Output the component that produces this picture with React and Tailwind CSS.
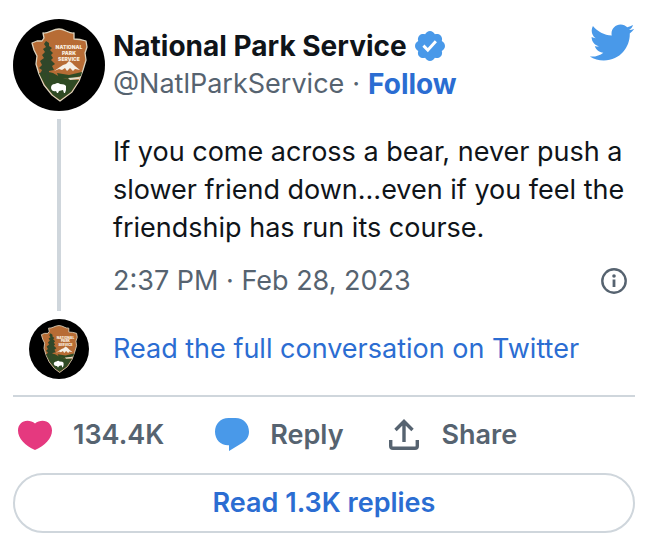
function ParkLogo({ className }) {
  return (
    <svg viewBox="0 0 92 92" className={className} role="img" aria-label="National Park Service">
      <circle cx="46" cy="46" r="46" fill="#000" />
      <path
        d="M30 14 C35 15 40 10 46 10 C52 10 56 15 61 14 L61 20 Q67 20 73 22 L74 28 L72 34 L73 41 L70 51 L66 62 L59 73 L47 82 L39 76 L31 66 L26 55 L23 45 L24 37 L21 31 L19 24 L24 22 L29 22 L31 19 Z"
        fill="#b76c35"
        stroke="#ddd3bd"
        strokeWidth="1.3"
        strokeLinejoin="round"
      />
      <path d="M26 54 Q34 52 40 54 Q46 58 53 60 L66 61 L58 73 L47 81 L40 76 L32 66 Z" fill="#2f4a24" />
      <path d="M44 54 L56 56 L69 53 L68 57 L56 60 L46 59 Z" fill="#2f4a24" />
      <path d="M55 59 L67 58 L66 60 L57 61 Z" fill="#e3ddca" />
      <path d="M41 52 L47 48 L50 46 L53 45 L56 42 L59 44 L62 47 L67 51 L62 50 L60 52 L57 49 L54 52 L52 49 L49 51 L46 50 Z" fill="#f5f0e7" />
      <path
        d="M33 22 L36 24 L36 27 L39 29 L37 31 L40 34 L38 36 L40 39 L38 41 L42 45 L39 47 L41 51 L36 52 L36 62 L33 62 L33 54 L27 55 L29 51 L26 49 L29 46 L27 42 L31 39 L29 36 L32 33 L30 30 L33 28 L31 25 Z"
        fill="#30472a"
      />
      <path
        d="M38 69 Q38 65 42 65 Q45 63 47 65 Q52 65 53 67 L53 71 L52 74 L51 74 L50 71 L46 72 L45 74 L44 74 L43 72 Q39 73 38 69 Z"
        fill="#fff"
      />
      <g fill="#f8ecdf" fontFamily="Inter, sans-serif" fontWeight="900" fontSize="5" textAnchor="middle">
        <text x="56" y="30">NATIONAL</text>
        <text x="56" y="36">PARK</text>
        <text x="56" y="42">SERVICE</text>
      </g>
    </svg>
  );
}

function VerifiedIcon() {
  return (
    <svg viewBox="1.75 1.75 20.5 20.5" className="size-[30px] shrink-0 fill-[#4999e9]" role="img" aria-label="Verified account">
      <path d="M22.25 12c0-1.43-.88-2.67-2.19-3.34.46-1.39.2-2.9-.81-3.91s-2.52-1.27-3.91-.81c-.66-1.31-1.91-2.19-3.34-2.19s-2.67.88-3.33 2.19c-1.4-.46-2.91-.2-3.92.81s-1.26 2.52-.8 3.91c-1.31.67-2.2 1.91-2.2 3.34s.89 2.67 2.2 3.34c-.46 1.39-.21 2.9.8 3.91s2.52 1.26 3.91.81c.67 1.31 1.91 2.19 3.34 2.19s2.68-.88 3.34-2.19c1.39.45 2.9.2 3.91-.81s1.27-2.52.81-3.91c1.31-.67 2.19-1.91 2.19-3.34zm-11.71 4.2L6.8 12.46l1.41-1.42 2.26 2.26 4.8-5.23 1.47 1.36-6.2 6.77z" />
    </svg>
  );
}

function TwitterBird() {
  return (
    <svg viewBox="0 0 24 24" className="size-[47px] fill-[#4999e9]" aria-hidden="true">
      <path d="M23.643 4.937c-.835.37-1.732.62-2.675.733.962-.576 1.7-1.49 2.048-2.578-.9.534-1.897.922-2.958 1.13-.85-.904-2.06-1.47-3.4-1.47-2.572 0-4.658 2.086-4.658 4.66 0 .364.042.718.12 1.06-3.873-.195-7.304-2.05-9.602-4.868-.4.69-.63 1.49-.63 2.342 0 1.616.823 3.043 2.072 3.878-.764-.025-1.482-.234-2.11-.583v.06c0 2.257 1.605 4.14 3.737 4.568-.392.106-.803.162-1.227.162-.3 0-.593-.028-.877-.082.593 1.85 2.313 3.198 4.352 3.234-1.595 1.25-3.604 1.995-5.786 1.995-.376 0-.747-.022-1.112-.065 2.062 1.323 4.51 2.093 7.14 2.093 8.57 0 13.255-7.098 13.255-13.254 0-.2-.005-.402-.014-.602.91-.658 1.7-1.477 2.323-2.41z" />
    </svg>
  );
}

function HeartIcon() {
  return (
    <svg viewBox="0 0 44 44" className="size-11 fill-[#e5397f]" aria-hidden="true">
      <path d="M22 10.6C24 8.6 27 7.8 29.5 7.8C35 7.8 39 12 39 17.5C39 25.5 32 32.5 22 37C12 32.5 5 25.5 5 17.5C5 12 9 7.8 14.5 7.8C17 7.8 20 8.6 22 10.6Z" />
    </svg>
  );
}

function ReplyIcon() {
  return (
    <svg viewBox="0 0 44 44" className="size-11 fill-[#4999e9]" aria-hidden="true">
      <path d="M18.5 5H25.5C33.5 5 39 11 39 18.7C39 23.5 36.5 27.3 32.500 29.8L19 38V32.3H18C10.5 32.3 5 26.3 5 18.7C5 11 10.5 5 18.5 5Z" />
    </svg>
  );
}

function ShareIcon() {
  return (
    <svg viewBox="0 0 44 44" className="size-11 fill-none stroke-[#566370]" strokeWidth="3.4" aria-hidden="true">
      <path d="M22 29V8.5M13.5 17L22 8.5L30.5 17" />
      <path d="M8.7 27V33Q8.7 35.3 11 35.3H33Q35.3 35.3 35.3 33V27" />
    </svg>
  );
}

function InfoIcon() {
  return (
    <svg viewBox="0 0 26 26" className="size-[26px]" fill="#566370" aria-hidden="true">
      <circle cx="13" cy="13" r="11.7" fill="none" stroke="#566370" strokeWidth="2.4" />
      <circle cx="13" cy="8" r="1.8" />
      <path d="M11.6 11.5H14.4V19H11.6Z" />
    </svg>
  );
}

function App() {
  return (
    <article className="bg-white pl-[13px] pr-[19px] pt-[19px] pb-6 font-['Inter',sans-serif] text-[27px] leading-[38px] text-[#0f1419]">
      <div className="grid grid-cols-[92px_1fr] gap-x-2">
        <div className="flex flex-col items-center gap-2">
          <ParkLogo className="size-[92px]" />
          <div className="w-1 flex-1 bg-[#cfd6dc]" />
        </div>
        <div>
          <header className="flex items-start justify-between">
            <div className="pt-2">
              <div className="flex items-center gap-2">
                <a href="#profile" className="text-[28px] leading-[38px] font-bold">National Park Service</a>
                <VerifiedIcon />
              </div>
              <div className="flex gap-2 text-[#566370]">
                <a href="#profile">@NatlParkService</a>
                <span>·</span>
                <a href="#follow" className="text-[28px] leading-[38px] font-bold text-[#2b6dd2]">Follow</a>
              </div>
            </div>
            <a href="#tweet" aria-label="View on Twitter">
              <TwitterBird />
            </a>
          </header>

          <p className="mt-[30px]">
            If you come across a bear, never push a slower friend down…even if you feel the friendship has run its course.
          </p>

          <div className="mt-[15px] mb-[11px] flex items-center justify-between pr-2 text-[#566370]">
            <a href="#tweet">2:37 PM · Feb 28, 2023</a>
            <a href="#info" aria-label="Twitter for Websites, Ads Information and Privacy">
              <InfoIcon />
            </a>
          </div>
        </div>
      </div>

      <div className="mt-2 grid grid-cols-[92px_1fr] items-center gap-x-2">
        <ParkLogo className="size-15 justify-self-center" />
        <a href="#conversation" className="text-[#2b6dd2]">Read the full conversation on Twitter</a>
      </div>

      <div className="mt-4 flex items-center gap-[38px] border-t-2 border-[#cfd6dc] pt-4 font-semibold text-[#566370]">
        <button type="button" className="mr-2 flex items-center gap-4">
          <HeartIcon />
          134.4K
        </button>
        <button type="button" className="flex items-center gap-4">
          <ReplyIcon />
          Reply
        </button>
        <button type="button" className="flex items-center gap-4">
          <ShareIcon />
          Share
        </button>
      </div>

      <button type="button" className="mt-4 h-15 w-full rounded-full border-2 border-[#cfd6dc] font-semibold text-[#2b6dd2]">
        Read 1.3K replies
      </button>
    </article>
  );
}

export default App;
